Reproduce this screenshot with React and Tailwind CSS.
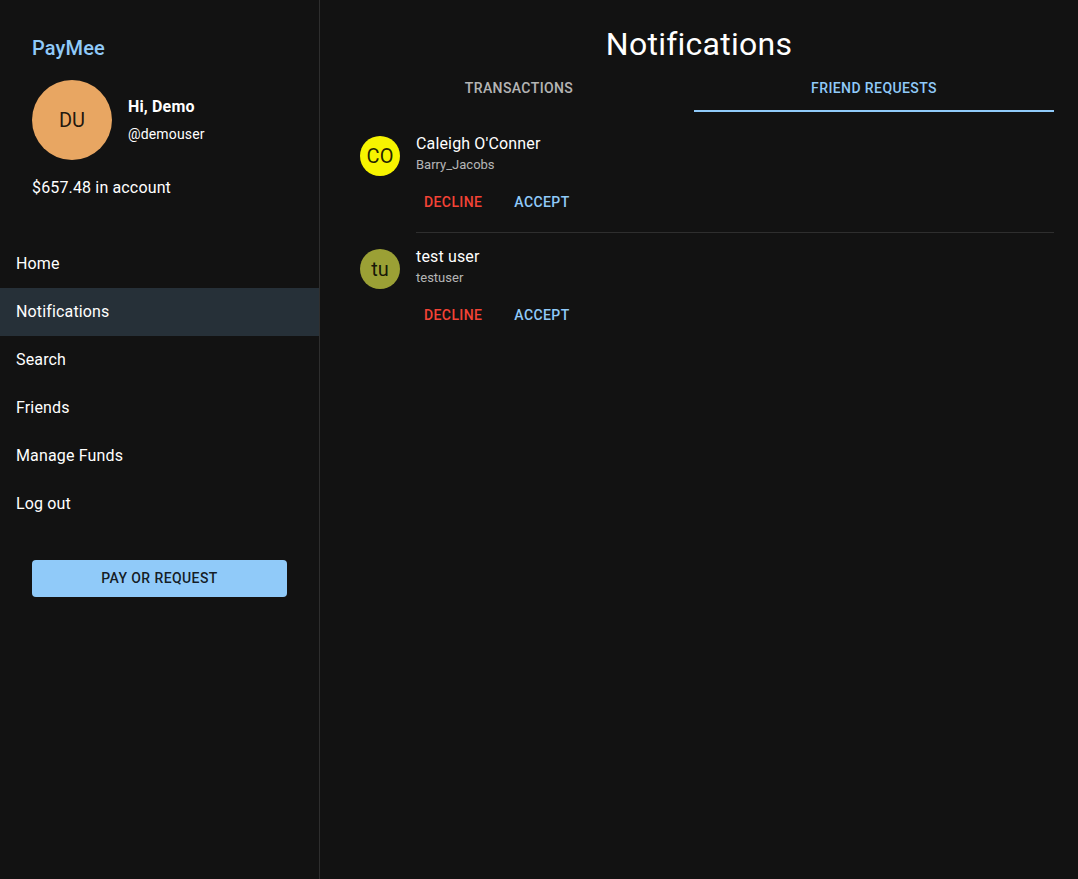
const navItems = ["Home", "Notifications", "Search", "Friends", "Manage Funds", "Log out"];

const requests = [
  { initials: "CO", name: "Caleigh O'Conner", username: "Barry_Jacobs", color: "bg-[#f7f400]" },
  { initials: "tu", name: "test user", username: "testuser", color: "bg-[#9ba035]" },
];

const Sidebar = () => (
  <aside className="w-[320px] shrink-0 border-r border-white/[0.12] min-h-screen">
    <div className="px-8 pt-8">
      <h1 className="text-[20px] leading-8 font-medium tracking-[0.15px] text-[#90caf9]">PayMee</h1>
      <div className="mt-4 flex items-start gap-4">
        <div className="w-20 h-20 rounded-full bg-[#e8a662] flex items-center justify-center text-[20px] text-black/[0.87]">
          DU
        </div>
        <div className="mt-[15px]">
          <p className="text-base leading-6 font-bold tracking-[0.15px] text-white">Hi, Demo</p>
          <p className="mt-[5px] text-sm leading-5 tracking-[0.15px] text-white">@demouser</p>
        </div>
      </div>
      <p className="mt-[16px] text-base leading-6 tracking-[0.15px] text-white">$657.48 in account</p>
    </div>

    <nav className="mt-[40px]">
      {navItems.map((item) => (
        <div
          key={item}
          className={`h-12 flex items-center px-4 text-base tracking-[0.15px] text-white ${
            item === "Notifications" ? "bg-[#263038]" : ""
          }`}
        >
          {item}
        </div>
      ))}
    </nav>

    <div className="px-8 mt-8">
      <button
        type="button"
        className="w-full h-[37px] pb-[2px] rounded bg-[#90caf9] text-sm font-medium uppercase tracking-[0.4px] text-black/[0.87]"
      >
        Pay or request
      </button>
    </div>
  </aside>
);

const RequestItem = ({ request, first, last }) => (
  <div>
    <div className={`flex px-4 ${first ? "pt-3" : "pt-[13px]"}`}>
      <div
        className={`mt-[3px] w-10 h-10 shrink-0 rounded-full ${request.color} flex items-center justify-center text-[20px] text-black/[0.87]`}
      >
        {request.initials}
      </div>
      <div className="ml-4 flex-1">
        <p className="text-base leading-[22px] tracking-[0.15px] text-white">{request.name}</p>
        <p className="text-[13px] leading-5 text-white/70">{request.username}</p>
        <div className="mt-[9px] flex gap-4">
          <button
            type="button"
            className="h-[36px] min-w-16 px-2 text-sm font-medium uppercase tracking-[0.4px] text-[#f44336]"
          >
            Decline
          </button>
          <button
            type="button"
            className="h-[36px] min-w-16 px-2 text-sm font-medium uppercase tracking-[0.4px] text-[#90caf9]"
          >
            Accept
          </button>
        </div>
      </div>
    </div>
    {!last && <div className="ml-[72px] mt-[12px] border-t border-white/[0.12]" />}
  </div>
);

export default function App() {
  return (
    <div className="flex min-h-screen bg-[#121212] font-['Roboto',sans-serif]">
      <Sidebar />
      <main className="flex-1 px-6 pt-[24px]">
        <h2 className="text-center text-[32px] leading-[40px] tracking-[0.25px] text-white">
          Notifications
        </h2>
        <div className="flex h-12">
          <div className="w-[350px] flex items-center justify-center text-sm font-medium uppercase tracking-[0.4px] text-white/70">
            Transactions
          </div>
          <div className="w-[360px] relative flex items-center justify-center text-sm font-medium uppercase tracking-[0.4px] text-[#90caf9]">
            Friend requests
            <span className="absolute left-0 right-0 bottom-0 h-[2px] bg-[#90caf9]" />
          </div>
        </div>
        <div className="pt-[9px]">
          {requests.map((r, i) => (
            <RequestItem
              key={r.name}
              request={r}
              first={i === 0}
              last={i === requests.length - 1}
            />
          ))}
        </div>
      </main>
    </div>
  );
}
